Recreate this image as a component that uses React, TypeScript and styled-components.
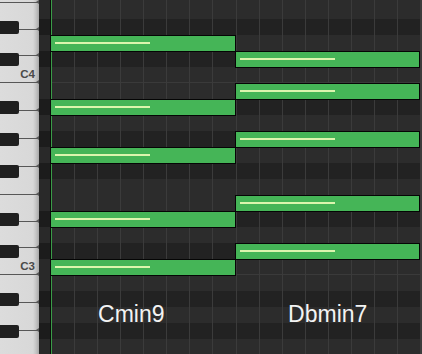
import React from "react";
import styled, { createGlobalStyle } from "styled-components";

const GlobalStyle = createGlobalStyle`
  html, body { margin: 0; padding: 0; background: #242424; overflow: hidden; }
  #root { width: 422px; height: 354px; }
`;

const ROW = 16;
const ROLL_OFFSET = -13;

const NAMES = [
  "F4", "E4", "D#4", "D4", "C#4", "C4", "B3", "A#3", "A3", "G#3", "G3", "F#3",
  "F3", "E3", "D#3", "D3", "C#3", "C3", "B2", "A#2", "A2", "G#2", "G2",
];
const rows = NAMES.map((name, i) => ({
  name,
  black: name.includes("#"),
  octave: name.startsWith("C") && !name.includes("#"),
  top: ROLL_OFFSET + i * ROW,
}));
const rowOf = (name: string) => NAMES.indexOf(name) + 1;

const THIRD = 80 / 3;
const whiteKeys: { name: string; h: number; label?: string }[] = [
  { name: "F4", h: 28 },
  { name: "E4", h: THIRD },
  { name: "D4", h: THIRD },
  { name: "C4", h: THIRD, label: "C4" },
  { name: "B3", h: 28 },
  { name: "A3", h: 28 },
  { name: "G3", h: 28 },
  { name: "F3", h: 28 },
  { name: "E3", h: THIRD },
  { name: "D3", h: THIRD },
  { name: "C3", h: THIRD, label: "C3" },
  { name: "B2", h: 28 },
  { name: "A2", h: 28 },
  { name: "G2", h: 28 },
];

const chords = [
  { label: "Cmin9", col: 1, shift: 24, notes: ["D4", "A#3", "G3", "D#3", "C3"] },
  { label: "Dbmin7", col: 9, shift: 0, notes: ["C#4", "B3", "G#3", "E3", "C#3"] },
];

const Screen = styled.div`
  display: flex;
  width: 422px;
  height: 354px;
  overflow: hidden;
  background: #2b2b2b;
  font-family: "Liberation Sans", Arial, sans-serif;
`;

const Keyboard = styled.div`
  position: relative;
  flex: 0 0 39px;
  overflow: hidden;
  background: linear-gradient(
    to right,
    #dcdcdc 0,
    #d8d8d8 33px,
    #c4c4c4 36px,
    #a8a8a8 39px
  );
`;

const WhiteKeys = styled.div`
  display: flex;
  flex-direction: column;
  margin-top: -25px;
`;

const WhiteKey = styled.div<{ $h: number }>`
  position: relative;
  flex: 0 0 ${(p) => p.$h}px;
  box-sizing: border-box;
  border-bottom: 1px solid #575757;
  display: flex;
  flex-direction: column;
  justify-content: flex-end;

  &::after {
    content: "";
    position: absolute;
    right: 0;
    bottom: -2px;
    border-right: 3px solid #575757;
    border-top: 2px solid transparent;
    border-bottom: 2px solid transparent;
  }
`;

const KeyLabel = styled.span`
  height: 15px;
  line-height: 15px;
  text-align: right;
  padding-right: 4px;
  font-size: 11.5px;
  font-weight: 700;
  color: #4a4a4a;
`;

const BlackKey = styled.div<{ $top: number }>`
  position: absolute;
  left: 0;
  top: ${(p) => p.$top}px;
  width: 19px;
  height: 13px;
  background: #1f1f1f;
  border-radius: 0 2px 2px 0;
`;

const Gutter = styled.div`
  flex: 0 0 11px;
  border-right: 1px solid #0a0a0a;
  overflow: hidden;
`;

const GutterTrack = styled.div`
  display: flex;
  flex-direction: column;
  margin-top: ${ROLL_OFFSET}px;
`;

const GutterCell = styled.div<{ $black: boolean }>`
  flex: 0 0 ${ROW}px;
  background: ${(p) => (p.$black ? "#1c1c1c" : "#292929")};
`;

const Roll = styled.div`
  flex: 0 0 369px;
  overflow: hidden;
`;

const RollGrid = styled.div`
  display: grid;
  grid-template-rows: repeat(${NAMES.length}, ${ROW}px);
  grid-template-columns: repeat(16, 1fr);
  margin-top: ${ROLL_OFFSET}px;
`;

const Lane = styled.div<{ $row: number; $black: boolean; $octave: boolean }>`
  grid-row: ${(p) => p.$row};
  grid-column: 1 / -1;
  background: ${(p) => (p.$black ? "#222222" : "#2c2c2c")};
  box-shadow: ${(p) => (p.$octave ? "inset 0 -1px 0 #3a3a3a" : "none")};
`;

const ColumnLine = styled.div<{ $col: number; $accent: boolean }>`
  grid-row: 1 / -1;
  grid-column: ${(p) => p.$col};
  border-left: 1px solid ${(p) => (p.$accent ? "#3a9c47" : "#3b3b3b")};
`;

const Note = styled.div<{ $row: number; $col: number }>`
  grid-row: ${(p) => p.$row};
  grid-column: ${(p) => p.$col} / span 8;
  align-self: start;
  height: 17px;
  margin-left: -1px;
  box-sizing: border-box;
  border: 1px solid #050505;
  background: #45b557;
  padding: 6px 0 0 4px;
`;

const NoteShine = styled.div`
  width: 95px;
  height: 2px;
  background: #dcf5ae;
`;

const ChordLabel = styled.div<{ $col: number; $shift: number }>`
  grid-row: ${rowOf("A2")};
  grid-column: ${(p) => p.$col} / span 8;
  align-self: end;
  justify-self: center;
  margin: 0 ${(p) => p.$shift}px -3px 0;
  font-size: 23px;
  line-height: 23px;
  color: #f3f3f3;
  white-space: nowrap;
`;

const RightEdge = styled.div`
  flex: 0 0 2px;
  background: #3c3c3c;
`;

export default function App() {
  return (
    <>
      <GlobalStyle />
      <Screen>
        <Keyboard>
          <WhiteKeys>
            {whiteKeys.map((k) => (
              <WhiteKey key={k.name} $h={k.h}>
                {k.label && <KeyLabel>{k.label}</KeyLabel>}
              </WhiteKey>
            ))}
          </WhiteKeys>
          {rows
            .filter((r) => r.black)
            .map((r) => (
              <BlackKey key={r.name} $top={r.top + 2} />
            ))}
        </Keyboard>
        <Gutter>
          <GutterTrack>
            {rows.map((r) => (
              <GutterCell key={r.name} $black={r.black} />
            ))}
          </GutterTrack>
        </Gutter>
        <Roll>
          <RollGrid>
            {rows.map((r, i) => (
              <Lane key={r.name} $row={i + 1} $black={r.black} $octave={r.octave} />
            ))}
            {Array.from({ length: 16 }, (_, i) => (
              <ColumnLine key={i} $col={i + 1} $accent={i === 0} />
            ))}
            {chords.map((c) =>
              c.notes.map((n) => (
                <Note key={c.label + n} $row={rowOf(n)} $col={c.col}>
                  <NoteShine />
                </Note>
              ))
            )}
            {chords.map((c) => (
              <ChordLabel key={c.label} $col={c.col} $shift={c.shift}>
                {c.label}
              </ChordLabel>
            ))}
          </RollGrid>
        </Roll>
        <RightEdge />
      </Screen>
    </>
  );
}
